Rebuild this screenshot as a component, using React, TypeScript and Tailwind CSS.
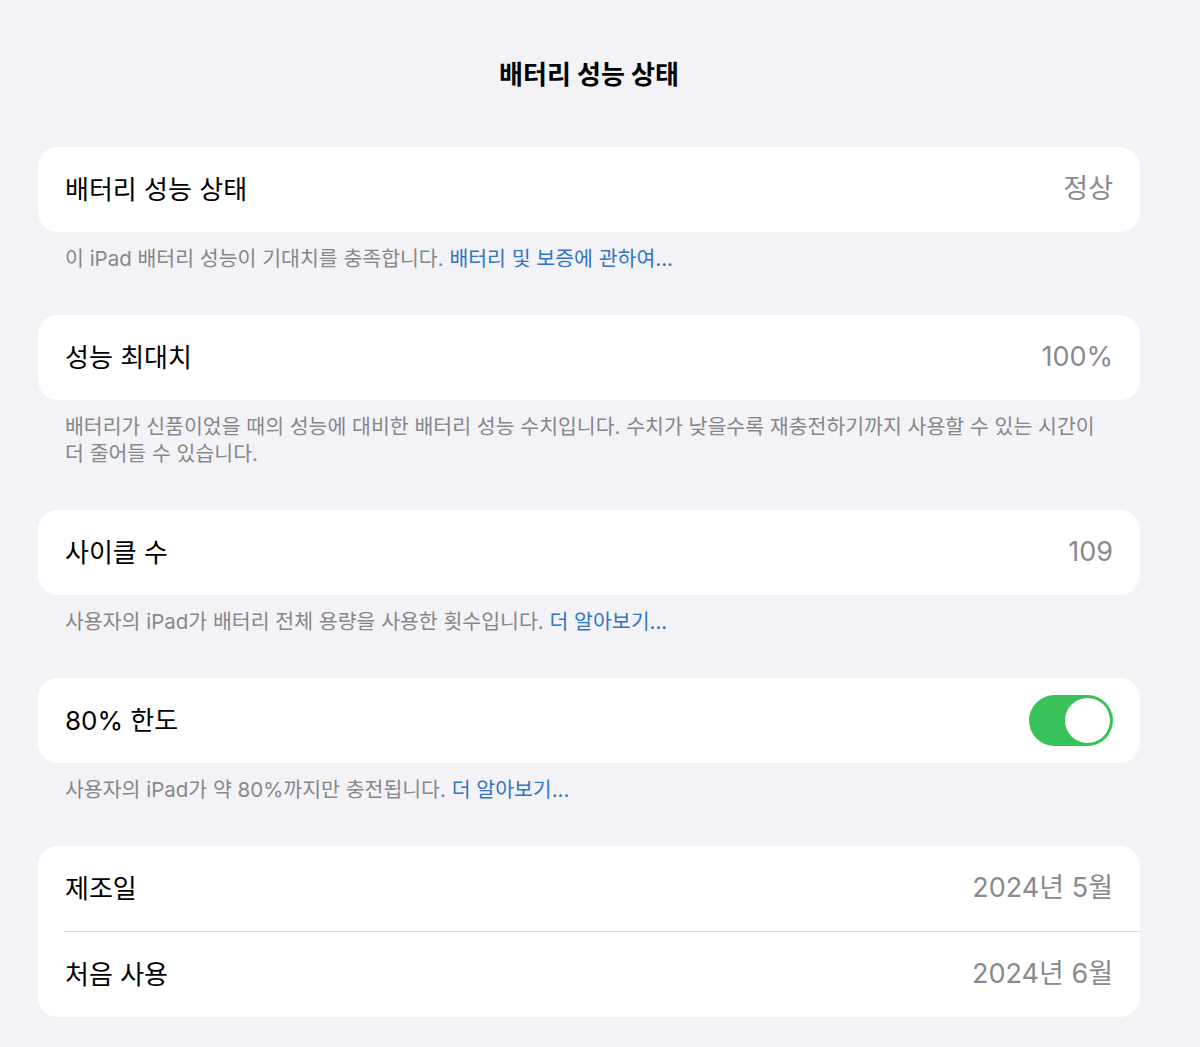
const FONT = "font-['Inter','Noto_Sans_CJK_KR',sans-serif]";

const Card = ({ children }: any) => {
  return <div className="rounded-[20px] bg-white">{children}</div>;
};

const Row = ({ label, value, right }: any) => {
  return (
    <div className="flex h-[85px] items-center justify-between pl-[27px] pr-[27px]">
      <span className="text-[26px] text-black">{label}</span>
      {right ? right : <span className="text-[27px] text-[#8a8a8e]">{value}</span>}
    </div>
  );
};

const Footer = ({ children }: any) => {
  return (
    <p className="pl-[27px] pr-[26px] pt-[13px] pb-[43px] text-[20.5px] leading-[27px] text-[#86868b]">
      {children}
    </p>
  );
};

const Link = ({ text }: any) => {
  return <span className="text-[#3176c4]">{text}</span>;
};

const Toggle = () => {
  return (
    <div className="flex h-[51px] w-[84px] items-center justify-end rounded-full bg-[#3ac25a] p-[3px]">
      <div className="h-[45px] w-[45px] rounded-full bg-white" />
    </div>
  );
};

export default function App() {
  return (
    <div className={`${FONT} min-h-[1047px] w-full bg-[#f2f2f7] pl-[38px] pr-[60px]`}>
      <div className="flex h-[147px] items-start justify-center pt-[56px]">
        <h1 className="text-[26px] font-bold leading-[38px] text-black">배터리 성능 상태</h1>
      </div>

      <Card>
        <Row label="배터리 성능 상태" value="정상" />
      </Card>
      <Footer>
        이 iPad 배터리 성능이 기대치를 충족합니다. <Link text="배터리 및 보증에 관하여..." />
      </Footer>

      <Card>
        <Row label="성능 최대치" value="100%" />
      </Card>
      <Footer>
        배터리가 신품이었을 때의 성능에 대비한 배터리 성능 수치입니다. 수치가 낮을수록 재충전하기까지 사용할 수 있는 시간이 더 줄어들 수 있습니다.
      </Footer>

      <Card>
        <Row label="사이클 수" value="109" />
      </Card>
      <Footer>
        사용자의 iPad가 배터리 전체 용량을 사용한 횟수입니다. <Link text="더 알아보기..." />
      </Footer>

      <Card>
        <Row label="80% 한도" right={<Toggle />} />
      </Card>
      <Footer>
        사용자의 iPad가 약 80%까지만 충전됩니다. <Link text="더 알아보기..." />
      </Footer>

      <Card>
        <Row label="제조일" value="2024년 5월" />
        <div className="ml-[26px] h-px bg-[#dcdcdf]" />
        <Row label="처음 사용" value="2024년 6월" />
      </Card>
    </div>
  );
}
